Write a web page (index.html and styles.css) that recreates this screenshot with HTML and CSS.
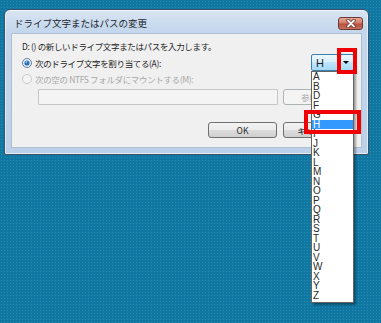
FILE: index.html
```html
<!DOCTYPE html>
<html lang="ja">
<head>
    <meta charset="UTF-8">
    <meta name="viewport" content="width=device-width, initial-scale=1.0">
    <title>ドライブ文字またはパスの変更</title>
    <link rel="stylesheet" href="styles.css">
</head>
<body>
    <div class="desktop">
        <div class="window">
            <div class="titlebar">
                <span class="title">ドライブ文字またはパスの変更</span>
                <span class="close-btn">
                    <svg width="12" height="9" viewBox="0 0 12 9">
                        <path d="M3 1.5 L9 7.5 M9 1.5 L3 7.5" stroke="#6b2a22" stroke-width="3.4" stroke-linecap="round"/>
                        <path d="M3 1.5 L9 7.5 M9 1.5 L3 7.5" stroke="#ffffff" stroke-width="1.8" stroke-linecap="round"/>
                    </svg>
                </span>
            </div>

            <div class="client">
                <p class="prompt">D: () の新しいドライブ文字またはパスを入力します。</p>

                <div class="option-row">
                    <label class="radio">
                        <svg class="radio-dot" width="10" height="10" viewBox="0 0 10 10">
                            <circle cx="5" cy="5" r="4.5" fill="#eef2f6" stroke="#5f7f9f"/>
                            <circle cx="5" cy="5" r="2.6" fill="#2a6fb5"/>
                            <circle cx="4.4" cy="4.3" r="1" fill="#8fc3ef"/>
                        </svg>
                        次のドライブ文字を割り当てる(A):
                    </label>
                    <div class="combo">
                        <span class="combo-value">H</span>
                        <span class="combo-arrow"></span>
                    </div>
                </div>

                <div class="option-row disabled">
                    <label class="radio">
                        <svg class="radio-dot" width="10" height="10" viewBox="0 0 10 10">
                            <circle cx="5" cy="5" r="4.5" fill="#f4f4f4" stroke="#c9c9c9"/>
                        </svg>
                        次の空の NTFS フォルダにマウントする(M):
                    </label>
                </div>

                <div class="path-row">
                    <div class="path-input"></div>
                    <button class="btn btn-browse" disabled>参照(R)...</button>
                </div>

                <div class="actions">
                    <button class="btn btn-ok">OK</button>
                    <button class="btn btn-cancel">キャンセル</button>
                </div>
            </div>
        </div>

        <ul class="drive-list">
            <li>A</li>
            <li>B</li>
            <li>D</li>
            <li>F</li>
            <li>G</li>
            <li class="selected">H</li>
            <li>I</li>
            <li>J</li>
            <li>K</li>
            <li>L</li>
            <li>M</li>
            <li>N</li>
            <li>O</li>
            <li>P</li>
            <li>Q</li>
            <li>R</li>
            <li>S</li>
            <li>T</li>
            <li>U</li>
            <li>V</li>
            <li>W</li>
            <li>X</li>
            <li>Y</li>
            <li>Z</li>
        </ul>

        <div class="callout callout-arrow"></div>
        <div class="callout callout-item"></div>
    </div>
</body>
</html>
```

FILE: styles.css
```css
:root {
    --desktop: #1077a3;
    --frame: #c2d5ea;
    --frame-dark: #3f5368;
    --client-bg: #f0f0f0;
    --text: #1e1e1e;
    --text-disabled: #a8a8a8;
    --callout: #f00000;
    --highlight: #3399ff;
}

* {
    margin: 0;
    padding: 0;
    box-sizing: border-box;
}

body {
    width: 381px;
    height: 323px;
    overflow: hidden;
    font-family: "Noto Sans CJK JP", sans-serif;
    color: var(--text);
}

.desktop {
    position: relative;
    width: 381px;
    height: 323px;
    background-color: var(--desktop);
    background-image: radial-gradient(rgba(70, 170, 190, 0.45) 0.6px, transparent 0.9px);
    background-size: 3px 3px;
}

/* dialog window */
.window {
    position: absolute;
    left: 4px;
    top: 9px;
    width: 365px;
    height: 146px;
    border: 1px solid var(--frame-dark);
    border-radius: 6px 6px 2px 2px;
    background: linear-gradient(#d9e5f2, #c4d7ec 20px, #bcd1e9);
    padding: 0 6px 6px;
    box-shadow: inset 0 0 0 1px rgba(255, 255, 255, 0.55);
}

.titlebar {
    height: 23px;
    display: flex;
    justify-content: space-between;
    align-items: flex-start;
    padding: 0 0 0 3px;
}

.title {
    font-size: 9.5px;
    line-height: 14px;
    margin-top: 6px;
    color: #1c2630;
}

.close-btn {
    width: 25px;
    height: 13px;
    margin-top: 7px;
    margin-right: -1px;
    display: flex;
    align-items: center;
    justify-content: center;
    border: 1px solid #6e3b33;
    border-radius: 3px;
    background: linear-gradient(#e6a897, #d07b67 45%, #b8503f 55%, #c9705c);
}

.client {
    height: 115px;
    background-color: var(--client-bg);
    border: 1px solid #aebfd4;
    padding: 0 7px 0 10px;
}

.prompt {
    font-size: 8.5px;
    letter-spacing: -0.35px;
    line-height: 14px;
    margin-top: 5px;
}

.option-row {
    display: flex;
    align-items: center;
    justify-content: space-between;
    height: 17px;
    margin-top: 1px;
}

.option-row.disabled {
    height: 14px;
    color: var(--text-disabled);
}

.radio {
    display: flex;
    align-items: center;
    gap: 3px;
    font-size: 8.5px;
    letter-spacing: -0.35px;
    line-height: 14px;
}

.combo {
    width: 43px;
    height: 17px;
    display: flex;
    align-items: center;
    justify-content: space-between;
    border: 1px solid #3c7fb1;
    border-radius: 2px;
    background: linear-gradient(#eaf6fd, #d9f0fc 45%, #bee6fd 50%, #a7d9f5);
    padding: 0 4px 0 4px;
}

.combo-value {
    font-family: "Liberation Sans", sans-serif;
    font-size: 11px;
    line-height: 14px;
}

.combo-arrow {
    width: 0;
    height: 0;
    border-left: 3px solid transparent;
    border-right: 3px solid transparent;
    border-top: 3px solid #000;
}

.path-row {
    display: flex;
    justify-content: space-between;
    margin-top: 3px;
    padding-left: 16px;
}

.path-input {
    width: 240px;
    height: 16px;
    border: 1px solid #c6c6c6;
    border-radius: 1px;
    background-color: #f4f4f4;
}

.btn {
    height: 16px;
    font-family: "Noto Sans CJK JP", sans-serif;
    font-size: 8.5px;
    color: var(--text);
    border: 1px solid #707070;
    border-radius: 3px;
    background: linear-gradient(#f2f2f2, #ebebeb 50%, #dddddd 50%, #cfcfcf);
}

.btn:disabled {
    color: var(--text-disabled);
    border-color: #adb2b5;
    background: #f4f4f4;
}

.btn-browse {
    width: 71px;
}

.actions {
    display: flex;
    justify-content: flex-end;
    gap: 6px;
    margin-top: 17px;
}

.btn-ok {
    width: 69px;
}

.btn-cancel {
    width: 71px;
}

/* open drop-down of the combo box */
.drive-list {
    position: absolute;
    left: 311px;
    top: 71px;
    width: 43px;
    height: 232px;
    list-style: none;
    background: #fff;
    border: 1px solid #646464;
    box-shadow: 2px 2px 2px rgba(0, 0, 0, 0.35);
    font-family: "Liberation Sans", sans-serif;
    font-size: 10px;
    color: #2a2a2a;
}

.drive-list li {
    height: 9.5px;
    line-height: 9.5px;
    padding-left: 1px;
}

.drive-list li.selected {
    background-color: var(--highlight);
    color: #fff;
}

/* red annotation boxes */
.callout {
    position: absolute;
    border: 4px solid var(--callout);
}

.callout-arrow {
    left: 337px;
    top: 48px;
    width: 20px;
    height: 26px;
}

.callout-item {
    left: 304px;
    top: 110px;
    width: 57px;
    height: 24px;
}
```
